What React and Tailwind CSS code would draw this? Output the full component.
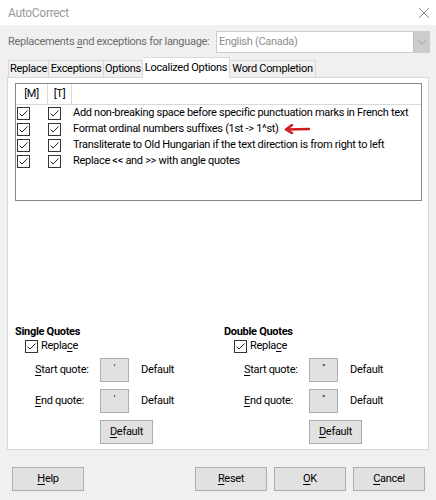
import React from "react";

const Check = ({ className = "" }) => (
  <svg width="13" height="13" viewBox="0 0 13 13" className={`shrink-0 ${className}`}>
    <rect x="0.5" y="0.5" width="12" height="12" fill="#fff" stroke="#333" />
    <path d="M2.5 6.5 L5 9 L10.5 3.5" fill="none" stroke="#222" strokeWidth="1" />
  </svg>
);

const U = ({ children }) => <span className="underline underline-offset-2">{children}</span>;

const Btn = ({ children, w = "w-[72px]" }) => (
  <div className={`${w} h-[24px] shrink-0 bg-[#e1e1e1] border border-[#adadad] flex items-center justify-center text-[#000]`}>
    {children}
  </div>
);

const QuoteBox = ({ ch }) => (
  <div className="w-[29px] h-[24px] shrink-0 bg-[#e1e1e1] border border-[#adadad] flex items-center justify-center text-[9px] leading-none pb-[4px]">
    {ch}
  </div>
);

const Row = ({ text, arrow }) => (
  <div className="h-[16px] flex items-center">
    <div className="w-[32px] shrink-0 pl-[1px] flex items-center"><Check /></div>
    <div className="w-[25px] shrink-0 flex items-center"><Check /></div>
    <span className="whitespace-nowrap">{text}</span>
    {arrow && (
      <svg width="26" height="10" viewBox="0 0 26 10" className="ml-[5px] shrink-0">
        <path d="M25 5 L3 5.5" stroke="#d01c1c" strokeWidth="2.5" strokeLinecap="round" />
        <path d="M8 1 L2 5.5 L8 9" fill="none" stroke="#d01c1c" strokeWidth="2.5" strokeLinecap="round" strokeLinejoin="round" />
      </svg>
    )}
  </div>
);

const QuoteGroup = ({ title, ch }) => (
  <div className="flex flex-col">
    <div className="font-bold h-[15px] leading-[15px] whitespace-nowrap">{title}</div>
    <div className="flex items-center ml-[10px] h-[14px] gap-[3px]">
      <Check />
      <span>Repla<U>c</U>e</span>
    </div>
    <div className="flex items-center mt-[5px] h-[24px]">
      <span className="ml-[20px] w-[65px] shrink-0 whitespace-nowrap"><U>S</U>tart quote:</span>
      <QuoteBox ch={ch} />
      <span className="ml-[12px]">Default</span>
    </div>
    <div className="flex items-center mt-[7px] h-[24px]">
      <span className="ml-[20px] w-[65px] shrink-0 whitespace-nowrap"><U>E</U>nd quote:</span>
      <QuoteBox ch={ch} />
      <span className="ml-[12px]">Default</span>
    </div>
    <div className="mt-[7px] ml-[85px]">
      <Btn w="w-[53px]"><span><U>D</U>efault</span></Btn>
    </div>
  </div>
);

const Tab = ({ w, children, first }) => (
  <div className={`${w} h-[17px] shrink-0 border border-b-0 ${first ? "" : "border-l-0"} border-[#d9d9d9] flex items-center justify-center whitespace-nowrap`}>
    {children}
  </div>
);

export default function App() {
  return (
    <div className="w-[436px] h-[500px] bg-[#f0f0f0] text-[11px] tracking-[-0.3px] text-[#000] flex flex-col overflow-hidden" style={{ fontFamily: 'Roboto, sans-serif' }}>
      {/* Title bar */}
      <div className="h-[25px] bg-white flex items-center justify-between pl-[8px] pr-[6px]">
        <span className="text-[#9a9a9a] text-[12px]">AutoCorrect</span>
        <svg width="12" height="12" viewBox="0 0 12 12">
          <path d="M1 1 L11 11 M11 1 L1 11" stroke="#8a8a8a" strokeWidth="1" />
        </svg>
      </div>

      {/* Language row */}
      <div className="flex items-center h-[22px] mt-[6px] pl-[8px]">
        <span className="w-[208px] shrink-0 whitespace-nowrap text-[#6d6d6d]">Replacements <U>a</U>nd exceptions for language:</span>
        <div className="w-[214px] h-[22px] border border-[#cccccc] bg-white flex items-center">
          <span className="flex-1 pl-[2px] text-[#8d8d8d]">English (Canada)</span>
          <div className="w-[16px] h-[20px] bg-[#cccccc] border-l border-[#bdbdbd] flex items-center justify-center">
            <svg width="8" height="5" viewBox="0 0 8 5"><path d="M0.5 0.5 L4 4 L7.5 0.5" fill="none" stroke="#a0a0a0" /></svg>
          </div>
        </div>
      </div>

      {/* Tabs */}
      <div className="flex items-end h-[20px] mt-[4px] pl-[8px]">
        <Tab w="w-[41px]" first>Replace</Tab>
        <Tab w="w-[55px]">Exceptions</Tab>
        <Tab w="w-[39px]">Options</Tab>
        <div className="w-[87px] h-[21px] -mb-[1px] shrink-0 bg-white border border-l-0 border-b-0 border-[#d9d9d9] flex items-center justify-center whitespace-nowrap z-10">Localized Options</div>
        <Tab w="w-[86px]">Word Completion</Tab>
      </div>

      {/* Panel */}
      <div className="ml-[7px] w-[422px] h-[373px] bg-white border border-[#d9d9d9] flex flex-col pl-[7px] pr-[6px] pt-[5px]">
        <div className="h-[118px] border border-[#828790] bg-white flex flex-col">
          <div className="h-[21px] flex border-b border-[#d9d9d9]">
            <div className="w-[32px] border-r border-[#d9d9d9] flex items-center justify-center">[M]</div>
            <div className="w-[24px] border-r border-[#d9d9d9] flex items-center justify-center">[T]</div>
            <div className="flex-1" />
          </div>
          <div>
            <Row text="Add non-breaking space before specific punctuation marks in French text" />
            <Row text="Format ordinal numbers suffixes (1st -> 1^st)" arrow />
            <Row text="Transliterate to Old Hungarian if the text direction is from right to left" />
            <Row text="Replace << and >> with angle quotes" />
          </div>
        </div>

        <div className="flex mt-[123px]">
          <div className="w-[209px] shrink-0"><QuoteGroup title="Single Quotes" ch="'" /></div>
          <div><QuoteGroup title="Double Quotes" ch={'"'} /></div>
        </div>
      </div>

      {/* Bottom buttons */}
      <div className="flex items-center mt-[17px] pl-[12px] pr-[11px]">
        <Btn><span><U>H</U>elp</span></Btn>
        <div className="flex-1" />
        <div className="flex gap-[7px]">
          <Btn><span><U>R</U>eset</span></Btn>
          <Btn><span><U>O</U>K</span></Btn>
          <Btn><span><U>C</U>ancel</span></Btn>
        </div>
      </div>
    </div>
  );
}
